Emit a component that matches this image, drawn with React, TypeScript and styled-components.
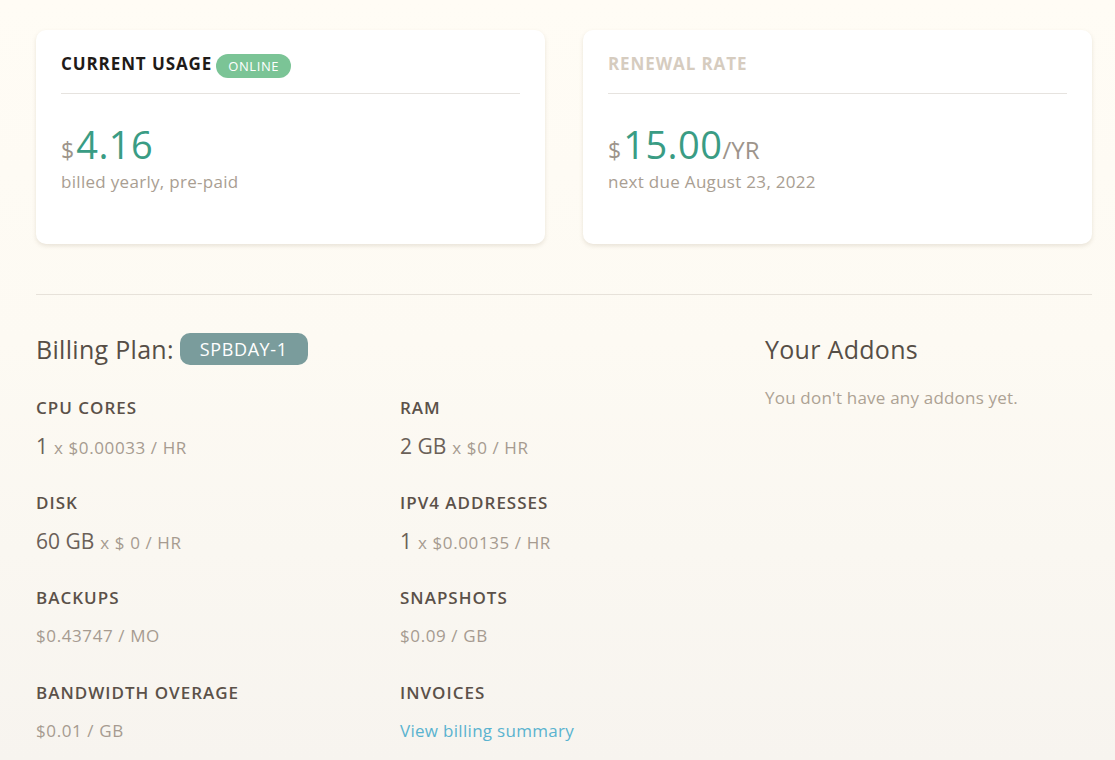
import { FC } from 'react';
import styled, { createGlobalStyle } from 'styled-components';

const GlobalStyle = createGlobalStyle`
  html, body {
    margin: 0;
    padding: 0;
  }
  body {
    font-family: "Open Sans", "Noto Sans", sans-serif;
    background: linear-gradient(180deg, #fffcf5 0%, #fdfaf3 45%, #f7f4ef 100%);
    min-height: 760px;
  }
`;

interface PlanItem {
  label: string;
  amount?: string;
  rate?: string;
  link?: string;
}

const planItems: PlanItem[] = [
  { label: 'CPU Cores', amount: '1', rate: 'x $0.00033 / HR' },
  { label: 'RAM', amount: '2 GB', rate: 'x $0 / HR' },
  { label: 'Disk', amount: '60 GB', rate: 'x $ 0 / HR' },
  { label: 'IPv4 Addresses', amount: '1', rate: 'x $0.00135 / HR' },
  { label: 'Backups', rate: '$0.43747 / MO' },
  { label: 'Snapshots', rate: '$0.09 / GB' },
  { label: 'Bandwidth Overage', rate: '$0.01 / GB' },
  { label: 'Invoices', link: 'View billing summary' },
];

const Page = styled.div`
  padding: 30px 23px 0 36px;
  color: #5a5149;
`;

const Cards = styled.div`
  display: grid;
  grid-template-columns: 509px 509px;
  gap: 38px;
`;

const Card = styled.div`
  background: #fff;
  border-radius: 10px;
  box-shadow: 0 2px 4px rgba(140, 120, 90, 0.18);
  height: 214px;
  box-sizing: border-box;
  padding: 19px 25px 0;
`;

const CardHead = styled.div`
  display: flex;
  align-items: center;
  gap: 4px;
  height: 28px;
  padding-bottom: 16px;
  border-bottom: 1px solid #e6e3df;
`;

const CardTitle = styled.h3<{ $muted?: boolean }>`
  margin: 0;
  font-size: 17px;
  font-weight: 700;
  letter-spacing: 0.9px;
  color: ${(p) => (p.$muted ? '#d6ccbf' : '#1f1b18')};
`;

const StatusBadge = styled.span`
  background: #7bc496;
  color: #fff;
  font-size: 13px;
  letter-spacing: 0.6px;
  line-height: 24px;
  height: 24px;
  padding: 0 12px;
  border-radius: 12px;
  margin-top: 5px;
`;

const Price = styled.div`
  display: flex;
  align-items: baseline;
  margin-top: 24px;
  height: 40px;
`;

const Currency = styled.span`
  font-size: 23px;
  color: #9d948b;
  margin-right: 2px;
`;

const Amount = styled.span`
  font-size: 38px;
  color: #3a9c84;
  letter-spacing: 0.5px;
`;

const Unit = styled.span`
  font-size: 24px;
  color: #9d948b;
`;

const Note = styled.div`
  margin-top: 12px;
  font-size: 17px;
  letter-spacing: 0.3px;
  color: #a99e92;
`;

const Divider = styled.hr`
  border: none;
  border-top: 1px solid #e7e2da;
  margin: 50px 0 0;
`;

const Lower = styled.div`
  display: grid;
  grid-template-columns: 729px 1fr;
  padding-top: 36px;
`;

const SectionTitle = styled.h2`
  margin: 0;
  font-size: 25px;
  font-weight: 400;
  letter-spacing: 0.3px;
  color: #564e46;
  display: flex;
  align-items: center;
  gap: 6px;
  height: 36px;
`;

const PlanBadge = styled.span`
  background: #7a9c9c;
  color: #fff;
  font-size: 18px;
  letter-spacing: 0.6px;
  border-radius: 10px;
  height: 32px;
  line-height: 32px;
  padding: 0 20px;
`;

const PlanGrid = styled.div`
  display: grid;
  grid-template-columns: 364px 1fr;
  row-gap: 21px;
  margin-top: 29px;
`;

const Item = styled.div``;

const Label = styled.div`
  font-size: 17px;
  font-weight: 600;
  letter-spacing: 1px;
  color: #5b5149;
  height: 24px;
  line-height: 24px;
`;

const Value = styled.div`
  margin-top: 14px;
  height: 36px;
  line-height: 24px;
  display: flex;
  align-items: baseline;
  gap: 6px;
`;

const Big = styled.span`
  font-size: 21px;
  color: #6a6058;
`;

const Rate = styled.span`
  font-size: 17px;
  letter-spacing: 0.6px;
  color: #a69b90;
`;

const Link = styled.a`
  font-size: 17px;
  letter-spacing: 0.3px;
  color: #5ab3cf;
  text-decoration: none;
`;

const Addons = styled.div``;

const Empty = styled.p`
  margin: 19px 0 0;
  font-size: 17px;
  letter-spacing: 0.2px;
  color: #ada294;
`;

const UsageCard: FC = () => (
  <Card>
    <CardHead>
      <CardTitle>CURRENT USAGE</CardTitle>
      <StatusBadge>ONLINE</StatusBadge>
    </CardHead>
    <Price>
      <Currency>$</Currency>
      <Amount>4.16</Amount>
    </Price>
    <Note>billed yearly, pre-paid</Note>
  </Card>
);

const RenewalCard: FC = () => (
  <Card>
    <CardHead>
      <CardTitle $muted>RENEWAL RATE</CardTitle>
    </CardHead>
    <Price>
      <Currency>$</Currency>
      <Amount>15.00</Amount>
      <Unit>/YR</Unit>
    </Price>
    <Note>next due August 23, 2022</Note>
  </Card>
);

export default function App() {
  return (
    <>
      <GlobalStyle />
      <Page>
        <Cards>
          <UsageCard />
          <RenewalCard />
        </Cards>
        <Divider />
        <Lower>
          <div>
            <SectionTitle>
              Billing Plan: <PlanBadge>SPBDAY-1</PlanBadge>
            </SectionTitle>
            <PlanGrid>
              {planItems.map((item) => (
                <Item key={item.label}>
                  <Label>{item.label.toUpperCase()}</Label>
                  <Value>
                    {item.amount && <Big>{item.amount}</Big>}
                    {item.rate && <Rate>{item.rate}</Rate>}
                    {item.link && <Link href="#">{item.link}</Link>}
                  </Value>
                </Item>
              ))}
            </PlanGrid>
          </div>
          <Addons>
            <SectionTitle>Your Addons</SectionTitle>
            <Empty>You don't have any addons yet.</Empty>
          </Addons>
        </Lower>
      </Page>
    </>
  );
}
